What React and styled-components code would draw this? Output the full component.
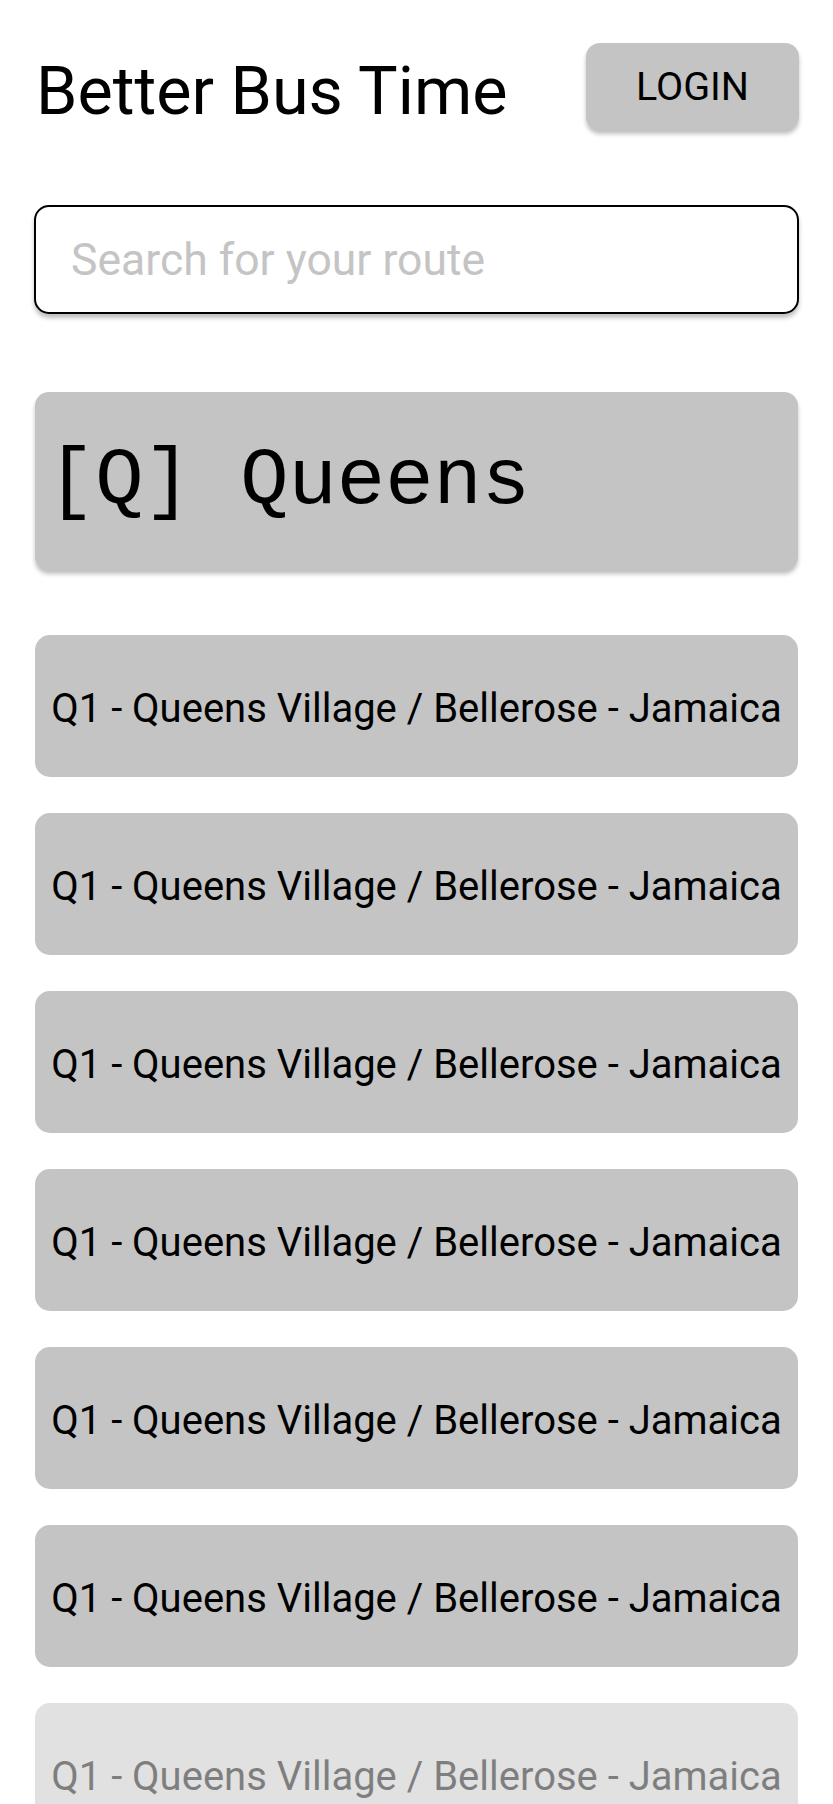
import React from "react";
import styled, { createGlobalStyle } from "styled-components";

const GlobalStyle = createGlobalStyle`
  * {
    box-sizing: border-box;
  }

  body {
    margin: 0;
    background: #ffffff;
    font-family: Roboto, "Liberation Sans", sans-serif;
    color: #000;
  }
`;

const Page = styled.div`
  padding: 43px 35px 0 35px;
`;

const Header = styled.header`
  display: flex;
  justify-content: space-between;
  align-items: flex-end;
`;

const Title = styled.h1`
  margin: 0 0 0 1px;
  font-size: 66.5px;
  font-weight: 400;
  line-height: 77px;
`;

const LoginButton = styled.button`
  width: 213px;
  height: 87px;
  margin-right: -1px;
  border: none;
  border-radius: 14px;
  background: #c4c4c4;
  box-shadow: 0 4px 4px rgba(0, 0, 0, 0.25);
  font-family: Roboto, "Liberation Sans", sans-serif;
  font-size: 39.5px;
  color: #000;
  cursor: pointer;
`;

const SearchInput = styled.input`
  display: block;
  width: calc(100% + 2px);
  height: 109px;
  margin: 75px -1px 0;
  padding: 0 35px;
  border: 2px solid #000;
  border-radius: 15px;
  background: #fff;
  box-shadow: 0 4px 4px rgba(0, 0, 0, 0.25);
  font-family: Roboto, "Liberation Sans", sans-serif;
  font-size: 44.5px;
  outline: none;

  &::placeholder {
    color: #c4c4c4;
  }
`;

const BoroughCard = styled.div`
  display: flex;
  align-items: center;
  height: 178px;
  margin-top: 78px;
  padding-left: 12px;
  border-radius: 14px;
  background: #c4c4c4;
  box-shadow: 0 4px 4px rgba(0, 0, 0, 0.25);
  font-family: "Liberation Mono", "DejaVu Sans Mono", monospace;
  font-size: 80.5px;
  white-space: pre;
`;

const RouteList = styled.div`
  display: flex;
  flex-direction: column;
  gap: 36px;
  margin-top: 65px;
`;

const RouteCard = styled.div`
  display: flex;
  align-items: center;
  justify-content: center;
  height: 142px;
  padding-top: 4px;
  border-radius: 15px;
  background: #c4c4c4;
  font-size: 40px;
  white-space: nowrap;
  opacity: ${(p) => (p.$faded ? 0.5 : 1)};
`;

const routes = Array.from({ length: 7 }, () => "Q1 - Queens Village / Bellerose - Jamaica");

const App = () => {
  return (
    <>
      <GlobalStyle />
      <Page>
        <Header>
          <Title>Better Bus Time</Title>
          <LoginButton>LOGIN</LoginButton>
        </Header>
        <SearchInput placeholder="Search for your route" />
        <BoroughCard>[Q] Queens</BoroughCard>
        <RouteList>
          {routes.map((name, i) => (
            <RouteCard key={i} $faded={i === routes.length - 1}>
              {name}
            </RouteCard>
          ))}
        </RouteList>
      </Page>
    </>
  );
};

export default App;
